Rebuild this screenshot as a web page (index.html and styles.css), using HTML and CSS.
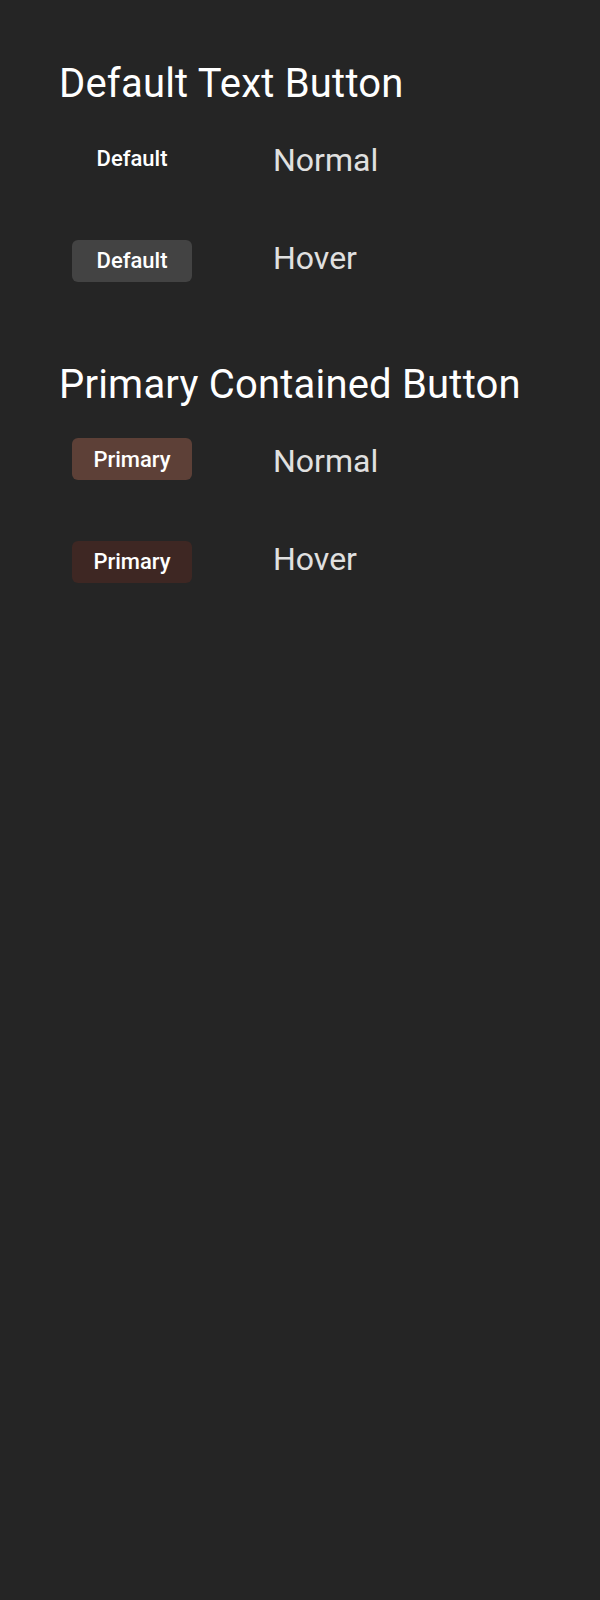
FILE: index.html
```html
<!DOCTYPE html>
<html lang="en">
<head>
<meta charset="utf-8">
<title>Buttons</title>
<link rel="stylesheet" href="styles.css">
</head>
<body>
<main class="page">
  <section class="group">
    <h2 class="group-title">Default Text Button</h2>
    <div class="row">
      <div class="btn-cell"><button class="btn btn-default">Default</button></div>
      <span class="state state-normal">Normal</span>
    </div>
    <div class="row">
      <div class="btn-cell"><button class="btn btn-default is-hover">Default</button></div>
      <span class="state state-hover">Hover</span>
    </div>
  </section>
  <section class="group">
    <h2 class="group-title">Primary Contained Button</h2>
    <div class="row">
      <div class="btn-cell"><button class="btn btn-primary">Primary</button></div>
      <span class="state state-normal">Normal</span>
    </div>
    <div class="row">
      <div class="btn-cell"><button class="btn btn-primary is-hover">Primary</button></div>
      <span class="state state-hover">Hover</span>
    </div>
  </section>
</main>
</body>
</html>
```

FILE: styles.css
```css
html, body {
  margin: 0;
  padding: 0;
  background: #252525;
}

body {
  font-family: Roboto, "Liberation Sans", sans-serif;
  color: #ffffff;
  min-height: 1600px;
}

.page {
  padding: 60px 0 0 59px;
}

.group + .group {
  margin-top: 80px;
}

.group-title {
  margin: 0 0 29px 0;
  font-size: 40px;
  font-weight: 400;
  line-height: 48px;
  letter-spacing: 0.2px;
  color: #ffffff;
}

.row {
  display: grid;
  grid-template-columns: 146px auto;
  column-gap: 68px;
  align-items: center;
  height: 42px;
}

.row + .row {
  margin-top: 60px;
}

.btn-cell {
  display: flex;
  justify-content: center;
}

.btn {
  width: 120px;
  height: 42px;
  border: 0;
  border-radius: 6px;
  font-family: Roboto, "Liberation Sans", sans-serif;
  font-size: 22px;
  font-weight: 500;
  letter-spacing: 0;
  color: #ffffff;
  background: transparent;
  padding: 0;
  cursor: pointer;
}

.btn-default.is-hover {
  background: #434343;
}

.btn-primary {
  background: #5d4037;
}

.btn-primary.is-hover {
  background: #3e2723;
}

.state {
  font-size: 32px;
  font-weight: 400;
  color: #e0e0e0;
}

.state-normal {
  margin-top: 3px;
}

.state-hover {
  margin-bottom: 5px;
}
```
